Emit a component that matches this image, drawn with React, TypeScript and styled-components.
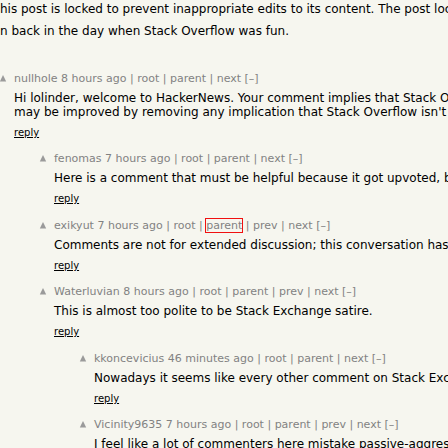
import React from "react";
import styled, { createGlobalStyle } from "styled-components";

const Global = createGlobalStyle`
  html, body {
    margin: 0;
    padding: 0;
    background: #f6f6ef;
    overflow: hidden;
  }
  body {
    font-family: "DejaVu Sans", Verdana, sans-serif;
  }
`;

const Page = styled.div`
  width: 448px;
  height: 448px;
  overflow: hidden;
  background: #f6f6ef;
`;

const RootText = styled.div`
  padding-top: 1.5px;
  margin-bottom: 34px;
  font-size: 12px;
  line-height: 14px;
  color: #000;
  white-space: nowrap;
`;

const Para = styled.p<{ $gap?: number }>`
  margin: ${(p) => p.$gap ?? 0}px 0 0;
`;

const Thread = styled.div`
  margin-left: -2px;
  display: flex;
  flex-direction: column;
  gap: 13.5px;
`;

const Row = styled.div<{ $level: number }>`
  display: flex;
  padding-left: ${(p) => p.$level * 40}px;
`;

const Vote = styled.div`
  width: 16px;
  flex: none;
  height: 13px;
  display: flex;
  align-items: flex-start;
`;

const Body = styled.div`
  display: flex;
  flex-direction: column;
  white-space: nowrap;
`;

const Meta = styled.div`
  font-size: 11px;
  line-height: 13px;
  color: #828282;
`;

const Highlight = styled.span`
  outline: 1px solid #f01010;
  outline-offset: 0px;
`;

const Text = styled.div`
  margin-top: 6px;
  font-size: 12px;
  line-height: 14px;
  color: #000;
`;

const Reply = styled.div`
  margin-top: 8px;
  font-size: 10px;
  line-height: 12px;
  color: #000;
  text-decoration: underline;
`;

const Arrow = () => (
  <svg width="10" height="13" viewBox="0 0 10 13">
    <polygon points="1.8,9.6 5,3 8.2,9.6" fill="#9a9a9a" />
  </svg>
);

type C = {
  level: number;
  user: string;
  age: string;
  prev: boolean;
  lines: string[];
  highlight?: boolean;
};

const comments: C[] = [
  {
    level: 0,
    user: "nullhole",
    age: "8 hours ago",
    prev: false,
    lines: [
      "Hi lolinder, welcome to HackerNews. Your comment implies that Stack Overflow is no longer fun; it",
      "may be improved by removing any implication that Stack Overflow isn't fun.",
    ],
  },
  {
    level: 1,
    user: "fenomas",
    age: "7 hours ago",
    prev: false,
    lines: ["Here is a comment that must be helpful because it got upvoted, but"],
  },
  {
    level: 1,
    user: "exikyut",
    age: "7 hours ago",
    prev: true,
    highlight: true,
    lines: ["Comments are not for extended discussion; this conversation has been moved to chat."],
  },
  {
    level: 1,
    user: "Waterluvian",
    age: "8 hours ago",
    prev: true,
    lines: ["This is almost too polite to be Stack Exchange satire."],
  },
  {
    level: 2,
    user: "kkoncevicius",
    age: "46 minutes ago",
    prev: false,
    lines: ["Nowadays it seems like every other comment on Stack Exchange is like this."],
  },
  {
    level: 2,
    user: "Vicinity9635",
    age: "7 hours ago",
    prev: true,
    lines: ["I feel like a lot of commenters here mistake passive-aggressive for polite."],
  },
];

const Comment = ({ c }: { c: C }) => (
  <Row $level={c.level}>
    <Vote>
      <Arrow />
    </Vote>
    <Body>
      <Meta>
        {c.user} {c.age} | root | {c.highlight ? <Highlight>parent</Highlight> : "parent"}
        {c.prev ? " | prev" : ""} | next [–]
      </Meta>
      <Text>
        {c.lines.map((l, i) => (
          <div key={i}>{l}</div>
        ))}
      </Text>
      <Reply>reply</Reply>
    </Body>
  </Row>
);

export default function App() {
  return (
    <Page>
      <Global />
      <RootText>
        <Para>his post is locked to prevent inappropriate edits to its content. The post lock was applied</Para>
        <Para $gap={8.35}>n back in the day when Stack Overflow was fun.</Para>
      </RootText>
      <Thread>
        {comments.map((c, i) => (
          <Comment key={i} c={c} />
        ))}
      </Thread>
    </Page>
  );
}
